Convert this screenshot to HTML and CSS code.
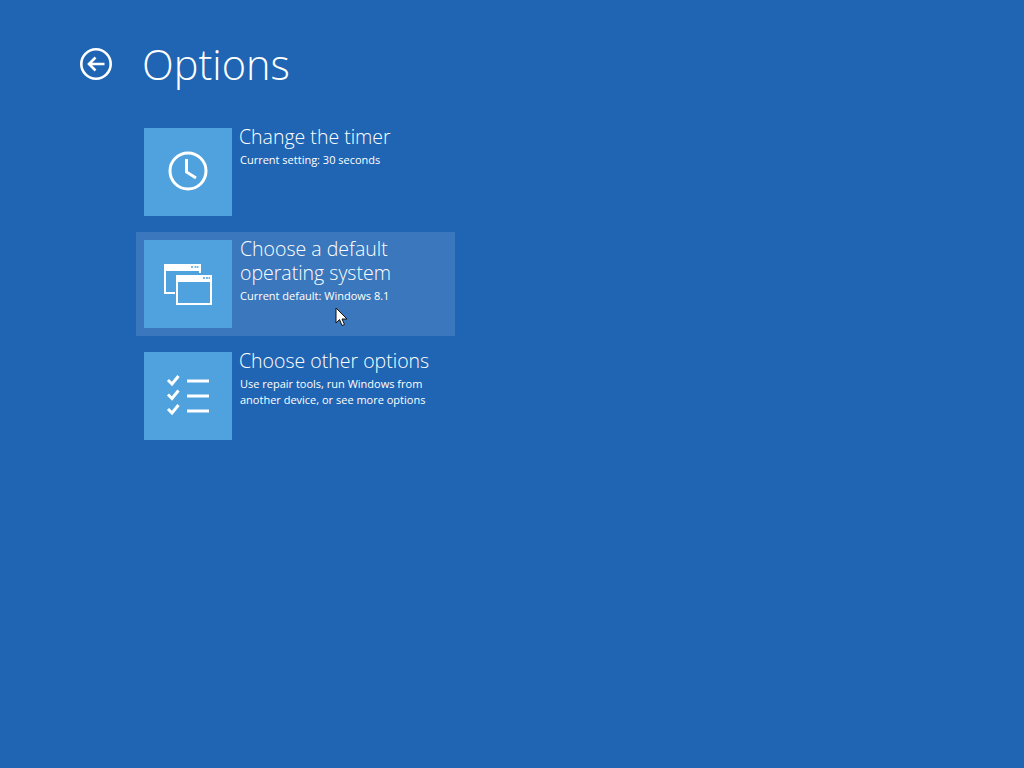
FILE: index.html
```html
<!DOCTYPE html>
<html lang="en">
<head>
<meta charset="utf-8">
<title>Options</title>
<link rel="stylesheet" href="styles.css">
</head>
<body>
<header class="header">
  <svg class="back" width="34" height="34" viewBox="0 0 34 34" fill="none" stroke="#fff" stroke-width="2.6">
    <circle cx="17" cy="17" r="14.7"/>
    <path d="M25.5 17H10M16.5 10.5L10 17l6.500 6.500"/>
  </svg>
  <h1 class="title">Options</h1>
</header>
<main class="list">
  <div class="item">
    <div class="tile">
      <svg class="clock" width="42" height="42" viewBox="0 0 42 42" fill="none" stroke="#fff" stroke-width="3">
        <circle cx="21" cy="21" r="18"/>
        <path d="M19.500 9V22l9.500 6"/>
      </svg>
    </div>
    <div class="text">
      <div class="name">Change the timer</div>
      <div class="desc">Current setting: 30 seconds</div>
    </div>
  </div>
  <div class="item active">
    <div class="tile">
      <svg class="windows" width="50" height="44" viewBox="0 0 50 44" fill="none" stroke="#fff" stroke-width="2">
        <path d="M12 31H2V3h35v8"/>
        <path d="M2 3h35v5H2z" fill="#fff"/>
        <rect x="14" y="14" width="34" height="28" fill="#4fa2dd"/>
        <path d="M14 14h34v5H14z" fill="#fff"/>
        <path d="M28 5h2M31.500 5h2M34 5h1.500M40 16h2M43 16h2M45.500 16h1.500" stroke="#4fa2dd" stroke-width="1.500"/>
      </svg>
    </div>
    <div class="text">
      <div class="name">Choose a default<br>operating system</div>
      <div class="desc">Current default: Windows 8.1</div>
    </div>
  </div>
  <div class="item">
    <div class="tile">
      <svg class="checks" width="44" height="44" viewBox="0 0 44 44" fill="none" stroke="#fff" stroke-width="3">
        <path d="M2 7l4 4 6.500-8M2 21.500l4 4 6.500-8M2 36l4 4 6.500-8"/>
        <path d="M21 8h22M21 23h22M21 38h22"/>
      </svg>
    </div>
    <div class="text">
      <div class="name">Choose other options</div>
      <div class="desc">Use repair tools, run Windows from<br>another device, or see more options</div>
    </div>
  </div>
</main>
<svg class="cursor" width="13" height="20" viewBox="0 0 13 20">
  <path d="M1 1v15l3.500-3.500L7 18.500l2.500-1-2.500-5.500h5z" fill="#fff" stroke="#111" stroke-width="1"/>
</svg>
</body>
</html>
```
FILE: styles.css
```css
* { box-sizing: border-box; }
html, body { height: 100%; }
body {
  margin: 0;
  background: #1f65b3;
  color: #fff;
  font-family: "Open Sans", "Noto Sans", "Liberation Sans", sans-serif;
  overflow: hidden;
}
.header {
  display: flex;
  align-items: center;
  height: 120px;
  padding: 0 0 0 79px;
  gap: 29px;
}
.back { flex: none; margin-top: 8px; }
.title {
  margin: 7px 0 0;
  font-size: 41.500px;
  font-weight: 300;
  line-height: 56px;
}
.list {
  display: flex;
  flex-direction: column;
  gap: 8px;
  padding-left: 136px;
}
.item {
  display: flex;
  gap: 7px;
  width: 319px;
  height: 104px;
  padding: 8px;
}
.active { background: #3a77bc; }
.active .text { padding-left: 1px; }
.tile {
  flex: none;
  display: flex;
  align-items: center;
  justify-content: center;
  width: 88px;
  height: 88px;
  background: #4fa2dd;
}
.clock { margin-bottom: 2px; }
.windows { margin-bottom: 1px; }
.checks { margin-bottom: 2px; }
.text { margin-top: -3px; }
.name {
  font-size: 19.500px;
  font-weight: 300;
  line-height: 24px;
  margin-bottom: 3px;
  white-space: nowrap;
}
.desc {
  font-size: 11px;
  font-weight: 400;
  line-height: 16px;
  padding-left: 1px;
  white-space: nowrap;
}
.active .desc { padding-left: 0; }
.cursor {
  position: absolute;
  left: 335px;
  top: 307px;
}
```
